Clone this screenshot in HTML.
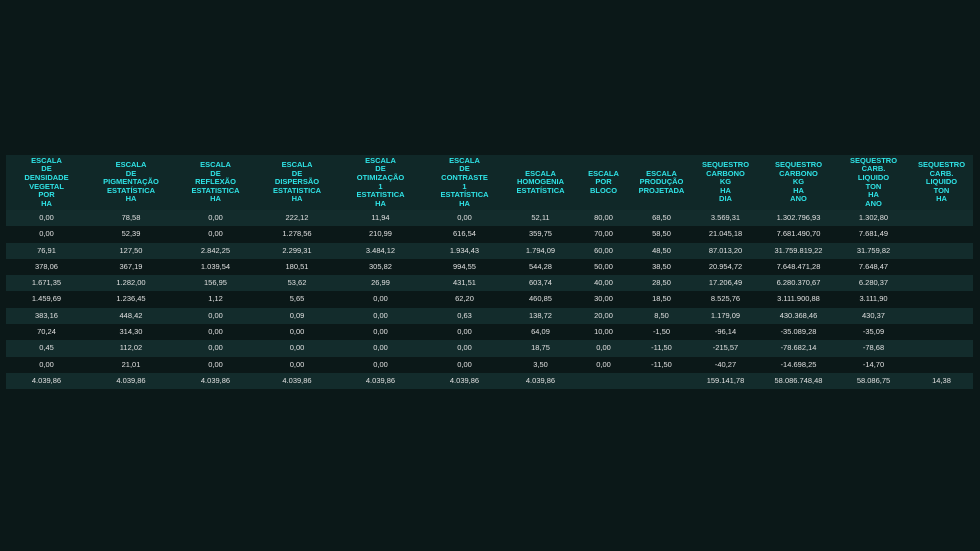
<!DOCTYPE html>
<html><head><meta charset="utf-8"><style>
html,body{margin:0;padding:0;background:#0b1818;width:980px;height:551px;overflow:hidden}
table{position:absolute;left:6px;top:155px;width:967px;border-collapse:collapse;font-family:"Liberation Sans",sans-serif;table-layout:fixed}
th{background:#102828;color:#2fe3e6;font-size:7.5px;font-weight:bold;line-height:8.6px;height:55px;padding:0;vertical-align:middle;text-align:center}
td{color:#e0e0e0;font-size:7.5px;height:16.3px;padding:0;text-align:center;line-height:16.3px}
tr.l td{background:#132c2c}
tr.d td{background:#0b1818}
</style></head><body>
<table>
<colgroup><col style="width:81px"><col style="width:88px"><col style="width:81px"><col style="width:82px"><col style="width:85px"><col style="width:83px"><col style="width:69px"><col style="width:57px"><col style="width:59px"><col style="width:69px"><col style="width:77px"><col style="width:73px"><col style="width:63px"></colgroup>
<tr><th>ESCALA<br>DE<br>DENSIDADE<br>VEGETAL<br>POR<br>HA</th><th>ESCALA<br>DE<br>PIGMENTAÇÃO<br>ESTATÍSTICA<br>HA</th><th>ESCALA<br>DE<br>REFLEXÃO<br>ESTATISTICA<br>HA</th><th>ESCALA<br>DE<br>DISPERSÃO<br>ESTATISTICA<br>HA</th><th>ESCALA<br>DE<br>OTIMIZAÇÃO<br>1<br>ESTATISTICA<br>HA</th><th>ESCALA<br>DE<br>CONTRASTE<br>1<br>ESTATÍSTICA<br>HA</th><th>ESCALA<br>HOMOGENIA<br>ESTATÍSTICA</th><th>ESCALA<br>POR<br>BLOCO</th><th>ESCALA<br>PRODUÇÃO<br>PROJETADA</th><th>SEQUESTRO<br>CARBONO<br>KG<br>HA<br>DIA</th><th>SEQUESTRO<br>CARBONO<br>KG<br>HA<br>ANO</th><th>SEQUESTRO<br>CARB.<br>LIQUIDO<br>TON<br>HA<br>ANO</th><th>SEQUESTRO<br>CARB.<br>LIQUIDO<br>TON<br>HA</th></tr>
<tr class="l"><td>0,00</td><td>78,58</td><td>0,00</td><td>222,12</td><td>11,94</td><td>0,00</td><td>52,11</td><td>80,00</td><td>68,50</td><td>3.569,31</td><td>1.302.796,93</td><td>1.302,80</td><td></td></tr>
<tr class="d"><td>0,00</td><td>52,39</td><td>0,00</td><td>1.278,56</td><td>210,99</td><td>616,54</td><td>359,75</td><td>70,00</td><td>58,50</td><td>21.045,18</td><td>7.681.490,70</td><td>7.681,49</td><td></td></tr>
<tr class="l"><td>76,91</td><td>127,50</td><td>2.842,25</td><td>2.299,31</td><td>3.484,12</td><td>1.934,43</td><td>1.794,09</td><td>60,00</td><td>48,50</td><td>87.013,20</td><td>31.759.819,22</td><td>31.759,82</td><td></td></tr>
<tr class="d"><td>378,06</td><td>367,19</td><td>1.039,54</td><td>180,51</td><td>305,82</td><td>994,55</td><td>544,28</td><td>50,00</td><td>38,50</td><td>20.954,72</td><td>7.648.471,28</td><td>7.648,47</td><td></td></tr>
<tr class="l"><td>1.671,35</td><td>1.282,00</td><td>156,95</td><td>53,62</td><td>26,99</td><td>431,51</td><td>603,74</td><td>40,00</td><td>28,50</td><td>17.206,49</td><td>6.280.370,67</td><td>6.280,37</td><td></td></tr>
<tr class="d"><td>1.459,69</td><td>1.236,45</td><td>1,12</td><td>5,65</td><td>0,00</td><td>62,20</td><td>460,85</td><td>30,00</td><td>18,50</td><td>8.525,76</td><td>3.111.900,88</td><td>3.111,90</td><td></td></tr>
<tr class="l"><td>383,16</td><td>448,42</td><td>0,00</td><td>0,09</td><td>0,00</td><td>0,63</td><td>138,72</td><td>20,00</td><td>8,50</td><td>1.179,09</td><td>430.368,46</td><td>430,37</td><td></td></tr>
<tr class="d"><td>70,24</td><td>314,30</td><td>0,00</td><td>0,00</td><td>0,00</td><td>0,00</td><td>64,09</td><td>10,00</td><td>-1,50</td><td>-96,14</td><td>-35.089,28</td><td>-35,09</td><td></td></tr>
<tr class="l"><td>0,45</td><td>112,02</td><td>0,00</td><td>0,00</td><td>0,00</td><td>0,00</td><td>18,75</td><td>0,00</td><td>-11,50</td><td>-215,57</td><td>-78.682,14</td><td>-78,68</td><td></td></tr>
<tr class="d"><td>0,00</td><td>21,01</td><td>0,00</td><td>0,00</td><td>0,00</td><td>0,00</td><td>3,50</td><td>0,00</td><td>-11,50</td><td>-40,27</td><td>-14.698,25</td><td>-14,70</td><td></td></tr>
<tr class="l"><td>4.039,86</td><td>4.039,86</td><td>4.039,86</td><td>4.039,86</td><td>4.039,86</td><td>4.039,86</td><td>4.039,86</td><td></td><td></td><td>159.141,78</td><td>58.086.748,48</td><td>58.086,75</td><td>14,38</td></tr>
</table>
</body></html>
